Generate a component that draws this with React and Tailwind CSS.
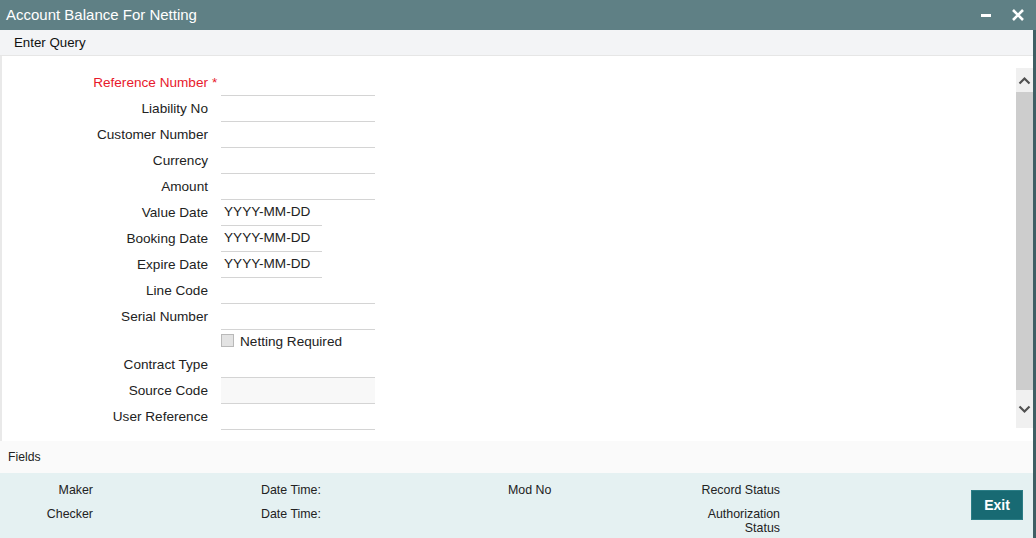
import React from "react";

const font = { fontFamily: '"Liberation Sans", Arial, sans-serif' };

const fields = [
  { label: "Reference Number", required: true },
  { label: "Liability No" },
  { label: "Customer Number" },
  { label: "Currency" },
  { label: "Amount" },
  { label: "Value Date", date: true },
  { label: "Booking Date", date: true },
  { label: "Expire Date", date: true },
  { label: "Line Code" },
  { label: "Serial Number" },
  { checkbox: "Netting Required" },
  { label: "Contract Type" },
  { label: "Source Code", disabled: true },
  { label: "User Reference" },
];

const FieldRow = ({ field }) => {
  if (field.checkbox) {
    return (
      <div className="flex h-[22px] items-center">
        <div className="w-[206px]" />
        <div className="ml-[13px] flex items-center">
          <span className="block h-[13px] w-[13px] border border-[#b9b9b9] bg-[#e3e3e3] -mt-[2px]" />
          <span className="ml-[6px] mt-[3px] text-[#222]">{field.checkbox}</span>
        </div>
      </div>
    );
  }
  return (
    <div className="flex h-[26px] items-stretch">
      <div className="flex w-[206px] items-center justify-end">
        <span className={"relative " + (field.required ? "text-[#e8192c]" : "text-[#222]")}>
          {field.label}
          {field.required && <span className="absolute left-full top-0 ml-[4px]">*</span>}
        </span>
      </div>
      <div
        className={
          "ml-[13px] flex items-center border-b border-[#d4d4d4] pl-[3px] text-[#222] " +
          (field.date ? "w-[101px] " : "w-[154px] ") +
          (field.disabled ? "bg-[#f8f8f8]" : "bg-white")
        }
      >
        {field.date ? "YYYY-MM-DD" : ""}
      </div>
    </div>
  );
};

const App = () => {
  return (
    <div className="flex h-[538px] w-[1036px] flex-col overflow-hidden bg-white text-[13.6px]" style={font}>
      {/* title bar */}
      <div className="flex h-[30px] shrink-0 items-center bg-[#5f8085] pl-[6px] pr-[11px] text-white">
        <span className="text-[15px]">Account Balance For Netting</span>
        <div className="ml-auto flex items-center">
          <svg width="12" height="12" viewBox="0 0 12 12">
            <rect x="1" y="5" width="10" height="3" fill="white" />
          </svg>
          <svg width="14" height="14" viewBox="0 0 14 14" className="ml-[19px]">
            <path d="M2 2 L12 12 M12 2 L2 12" stroke="white" strokeWidth="2.6" />
          </svg>
        </div>
      </div>

      <div className="flex min-h-0 flex-1 flex-col border-r-[3px] border-[#3f5f64]">
        {/* toolbar */}
        <div className="flex h-[26px] shrink-0 items-center border-b border-[#e6e6e6] bg-[#f3f4f6] pl-[14px] text-[13.3px] text-[#111]">
          Enter Query
        </div>

        {/* form */}
        <div className="flex h-[385px] shrink-0 border-l-2 border-[#e9e9e9]">
          <div className="flex-1 pt-[14px]">
            {fields.map((f, i) => (
              <FieldRow key={i} field={f} />
            ))}
          </div>
          <div className="mt-[12px] flex h-[360px] w-[17px] flex-col bg-[#f0f0f0]">
            <div className="flex h-[24px] items-center justify-center">
              <svg width="13" height="9" viewBox="0 0 13 9">
                <path d="M1.5 7.5 L6.5 2.5 L11.5 7.5" fill="none" stroke="#505050" strokeWidth="2.2" />
              </svg>
            </div>
            <div className="h-[298px] bg-[#cdcdcd]" />
            <div className="flex flex-1 items-center justify-center">
              <svg width="13" height="9" viewBox="0 0 13 9">
                <path d="M1.5 1.5 L6.5 6.5 L11.5 1.5" fill="none" stroke="#505050" strokeWidth="2.2" />
              </svg>
            </div>
          </div>
        </div>

        {/* fields strip */}
        <div className="flex h-[32px] shrink-0 items-center bg-[#fafafa] pl-[8px] text-[12.2px] text-[#222]">
          Fields
        </div>

        {/* audit footer */}
        <div className="flex flex-1 bg-[#e5f1f2] pt-[10px] text-[12.4px] leading-[14px] text-[#222]">
          <div className="flex w-[93px] flex-col items-end gap-[10px]">
            <span>Maker</span>
            <span>Checker</span>
          </div>
          <div className="ml-[168px] flex w-[247px] flex-col gap-[10px]">
            <span>Date Time:</span>
            <span>Date Time:</span>
          </div>
          <div className="w-[150px]">
            <span>Mod No</span>
          </div>
          <div className="flex w-[122px] flex-col items-end gap-[10px] text-right">
            <span>Record Status</span>
            <span>
              Authorization
              <br />
              Status
            </span>
          </div>
          <div className="ml-auto mr-[10px] mt-[7px]">
            <button className="h-[30px] w-[52px] border border-[#2b7d86] bg-[#186a73] text-[14px] font-bold text-white">
              Exit
            </button>
          </div>
        </div>
      </div>
    </div>
  );
};

export default App;
